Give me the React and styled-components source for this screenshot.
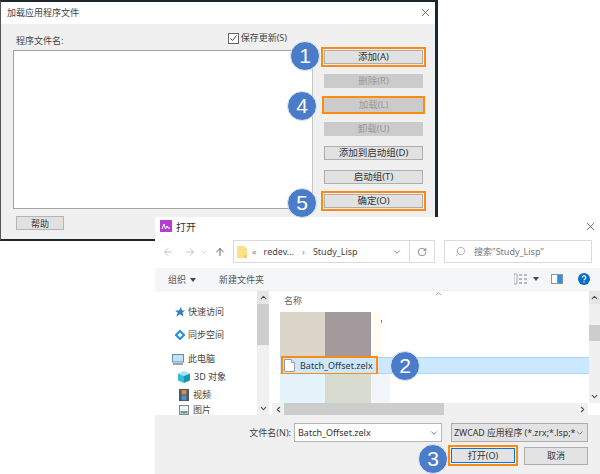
import React from 'react'
import styled, { createGlobalStyle } from 'styled-components'
import { X, ArrowLeft, ArrowRight, ArrowUp, ChevronDown, ChevronUp, ChevronLeft, ChevronRight, RotateCw, Search } from 'lucide-react'

const orange = '#ff8a0f'

const Global = createGlobalStyle`
  html, body { margin: 0; padding: 0; background: #fff; }
  * { box-sizing: border-box; }
  body {
    font-family: "Noto Sans", "Noto Sans CJK SC", sans-serif;
    font-size: 9px;
    color: #333;
  }
`

const Desktop = styled.div`
  position: relative;
  width: 600px;
  height: 474px;
  overflow: hidden;
  background: #fff;
`

const Badge = styled.div`
  position: absolute;
  left: ${({ $x }) => $x - 15}px;
  top: ${({ $y }) => $y - 15}px;
  width: 30px;
  height: 30px;
  border-radius: 50%;
  background: #4a7cc9;
  border: 1px solid #dfe7f4;
  color: #fff;
  font: 21px/28px "Liberation Sans", sans-serif;
  text-align: center;
  z-index: 5;
`

/* back dialog */
const LoadWindow = styled.section`
  position: absolute;
  left: 0;
  top: 0;
  width: 438px;
  height: 241px;
  background: #f0f0f0;
  border-style: solid;
  border-color: #1d2730;
  border-width: 2px 3px 2px 1px;
  border-left-color: #555;
`

const LoadTitle = styled.header`
  height: 22px;
  background: #fff;
  display: flex;
  align-items: center;
  justify-content: space-between;
  padding: 0 3px 2px 6px;
  color: #444;
`

const LoadBody = styled.div`
  display: flex;
  padding: 0 0 0 12px;
`

const FileColumn = styled.div`
  width: 300px;
  margin-right: 11px;
  padding-top: 8px;
`

const ListHead = styled.div`
  height: 18px;
  display: flex;
  justify-content: space-between;
  align-items: flex-start;
  padding: 2px 26px 0 3px;
  line-height: 14px;
  color: #444;
`

const SaveOption = styled.label`
  display: flex;
  align-items: center;
  gap: 2px;
  margin-top: -3px;
`

const CheckBox = styled.svg`
  width: 11px;
  height: 11px;
`

const FileList = styled.div`
  height: 159px;
  background: #fff;
  border: 1px solid #a4a4a4;
  border-right-color: #c4c4c4;
`

const HelpButton = styled.button`
  display: block;
  width: 48px;
  height: 14px;
  margin: 7px 0 0 3px;
  padding: 0;
  background: #e1e1e1;
  border: 1px solid #b4b4b4;
  font: inherit;
  line-height: 11px;
  color: #333;
`

const ActionColumn = styled.div`
  display: flex;
  flex-direction: column;
  gap: 10px;
  padding-top: 26px;
`

const ActionButton = styled.button`
  width: 99px;
  height: 14px;
  padding: 0 0 1px;
  font: inherit;
  font-size: 9.5px;
  line-height: 11px;
  background: ${({ disabled }) => (disabled ? '#cbcbcb' : '#e1e1e1')};
  border: 1px solid ${({ disabled }) => (disabled ? '#cbcbcb' : '#adadad')};
  color: ${({ disabled }) => (disabled ? '#999' : '#333')};
  outline: ${({ $marked }) => ($marked ? `2px solid ${orange}` : 'none')};
  outline-offset: ${({ $marked }) => ($marked === 'wide' ? 1 : 0)}px;
`

/* front file picker */
const OpenWindow = styled.section`
  position: absolute;
  left: 155px;
  top: 217px;
  width: 445px;
  height: 257px;
  background: #fff;
  z-index: 2;
  display: flex;
  flex-direction: column;
`

const OpenTitle = styled.header`
  height: 21px;
  flex: none;
  display: flex;
  align-items: center;
  gap: 4px;
  padding: 0 3px 3px 5px;
  font-size: 10px;
`

const Spacer = styled.div`
  flex: ${({ $w }) => ($w ? 'none' : 1)};
  width: ${({ $w }) => ($w ? `${$w}px` : 'auto')};
`

const NavBar = styled.div`
  height: 30px;
  flex: none;
  display: flex;
  align-items: flex-start;
  padding: 2px 8px 0 7px;
`

const NavButton = styled.span`
  width: ${({ $w }) => $w}px;
  height: 23px;
  flex: none;
  display: flex;
  align-items: center;
  color: ${({ $tone }) => $tone || '#c4c4c4'};
`

const AddressBox = styled.div`
  width: 202px;
  height: 23px;
  flex: none;
  display: flex;
  align-items: center;
  border: 1px solid #dadada;
  padding-left: 3px;
  color: #444;
`

const Crumb = styled.span`
  margin-left: ${({ $gap }) => $gap}px;
  color: ${({ $dim }) => ($dim ? '#888' : '#444')};
  white-space: nowrap;
`

const AddressChevron = styled.span`
  display: flex;
  margin-right: 7px;
  color: #666;
`

const AddressTail = styled.span`
  width: 25px;
  height: 21px;
  flex: none;
  display: flex;
  align-items: center;
  justify-content: center;
  border-left: 1px solid #dadada;
  color: #777;
`

const SearchBox = styled.div`
  width: 148px;
  height: 23px;
  flex: none;
  margin-left: 9px;
  display: flex;
  align-items: center;
  border: 1px solid #dadada;
  padding-left: 10px;
  gap: 8px;
  color: #777;
`

const MirroredSearch = styled(Search)`
  transform: scaleX(-1);
`

const ToolBar = styled.div`
  height: 23px;
  flex: none;
  display: flex;
  align-items: center;
  background: #f4f6f8;
  border-bottom: 1px solid #eef0f2;
  padding: 0 10px 0 13px;
  color: #555;
`

const ToolLabel = styled.span`
  margin-right: ${({ $gap }) => $gap}px;
`

const Caret = styled.span`
  display: inline-block;
  width: 0;
  height: 0;
  margin-left: ${({ $left }) => $left}px;
  border: 3.5px solid transparent;
  border-top: 4px solid #3d4a5c;
  border-bottom: 0;
  vertical-align: 1px;
`

const Browser = styled.div`
  height: 124px;
  flex: none;
  display: flex;
`

const Sidebar = styled.nav`
  width: 102px;
  flex: none;
  overflow: hidden;
  padding-top: 12px;
`

const SideItem = styled.div`
  height: ${({ $h }) => $h || 18}px;
  margin-top: ${({ $top }) => $top || 0}px;
  display: flex;
  align-items: center;
  gap: ${({ $gap }) => $gap}px;
  padding-left: ${({ $indent }) => $indent}px;
  line-height: 10px;
  white-space: nowrap;
  color: #444;
`

const SideScroll = styled.div`
  width: 12px;
  flex: none;
  background: #f0f0f0;
  display: flex;
  flex-direction: column;
  align-items: center;
  color: #555;
`

const ScrollEnd = styled.div`
  height: 13px;
  width: 100%;
  flex: none;
  display: flex;
  align-items: center;
  justify-content: center;
  background: ${({ $fill }) => $fill || 'transparent'};
`

const ScrollThumb = styled.div`
  width: 100%;
  height: ${({ $h }) => $h}px;
  margin-bottom: auto;
  background: #cdcdcd;
`

const ListPane = styled.div`
  flex: 1;
  min-width: 0;
  display: flex;
  flex-direction: column;
`

const ListBody = styled.div`
  height: 112px;
  flex: none;
  display: flex;
`

const Rows = styled.div`
  flex: 1;
  min-width: 0;
  padding-left: 11px;
`

const ColumnHead = styled.div`
  position: relative;
  height: 21px;
  padding: 3px 0 0 4px;
  color: #666;
`

const SortMark = styled.span`
  position: absolute;
  left: 154px;
  top: -3px;
  color: #888;
`

const Swatches = styled.div`
  height: ${({ $h }) => $h}px;
  display: flex;
`

const Swatch = styled.div`
  width: ${({ $w }) => $w}px;
  background: ${({ $c }) => $c};
  padding: 8px 0 0 10px;
`

const SwatchDot = styled.div`
  width: 1px;
  height: 3px;
  background: #6f93b8;
`

const SelectedRow = styled.div`
  height: 17px;
  background: #cce8ff;
  border-top: 1px solid #a6d7ff;
  border-bottom: 1px solid #a6d7ff;
  display: flex;
`

const FileName = styled.div`
  width: 97px;
  height: 19px;
  margin: -2px 0 0 1px;
  flex: none;
  display: flex;
  align-items: center;
  gap: 5px;
  outline: 2px solid ${orange};
  outline-offset: -2px;
  padding-left: 3px;
  color: #333;
  white-space: nowrap;
`

const RowScroll = styled.div`
  width: 11px;
  flex: none;
  background: #f0f0f0;
  display: flex;
  flex-direction: column;
  color: #555;
`

const RowThumb = styled.div`
  height: 16px;
  margin-top: 21px;
  margin-bottom: auto;
  background: #cdcdcd;
`

const HScroll = styled.div`
  height: 12px;
  flex: none;
  margin: 0 12px 0 3px;
  display: flex;
  align-items: center;
  background: #f0f0f0;
  color: #555;
`

const HThumb = styled.div`
  width: 160px;
  height: 12px;
  background: #cdcdcd;
  margin-right: auto;
`

const HEnd = styled.span`
  width: 12px;
  flex: none;
  display: flex;
  justify-content: center;
`

const Footer = styled.footer`
  flex: 1;
  background: #f0f0f0;
  display: flex;
  flex-direction: column;
  align-items: flex-end;
  gap: 5px;
  padding: 8px 12px 0 0;
`

const FooterRow = styled.div`
  display: flex;
  align-items: center;
  gap: 9px;
`

const FieldLabel = styled.span`
  margin-right: -6px;
  color: #444;
`

const NameField = styled.div`
  width: 148px;
  height: 19px;
  background: #fff;
  border: 1px solid #b5b5b5;
  display: flex;
  align-items: center;
  justify-content: space-between;
  padding: 0 2px 0 3px;
  color: #333;
`

const FilterField = styled(NameField)`
  width: 137px;
  background: #e3e3e3;
  border-color: #adadad;
  padding-left: 2px;
  white-space: nowrap;
  font-size: 8.8px;
`

const DialogButton = styled.button`
  width: 64px;
  height: ${({ $primary }) => ($primary ? 15 : 18)}px;
  margin: ${({ $primary }) => ($primary ? '1px 0 2px' : 0)};
  padding: 0;
  font: inherit;
  line-height: 12px;
  color: #333;
  background: #e3e3e3;
  border: 1px solid ${({ $primary }) => ($primary ? '#0078d7' : '#adadad')};
  outline: ${({ $primary }) => ($primary ? `2px solid ${orange}` : 'none')};
  outline-offset: 1px;
`

const AppMark = () => (
  <svg width="12" height="12" viewBox="0 0 12 12">
    <rect width="12" height="12" fill="#b23fd0" />
    <path d="M2 9l2-5 1.5 5L7 6l1 2h2" fill="none" stroke="#fff" strokeWidth="1" />
  </svg>
)

const FolderIcon = () => (
  <svg width="10" height="12" viewBox="0 0 10 12">
    <path d="M0 0h7l3 2v10H0z" fill="#ffe08a" />
    <path d="M7 9h3v3H7z" fill="#f4cc62" />
  </svg>
)

const ViewIcon = () => (
  <svg width="13" height="12" viewBox="0 0 13 12" fill="#b4bac2">
    <path d="M0 1h3v10H0z" fill="none" stroke="#a8aeb6" />
    <path d="M5 1h3v2H5zM10 1h3v2h-3zM5 5h3v2H5zM10 5h3v2h-3zM5 9h3v2H5zM10 9h3v2h-3z" />
  </svg>
)

const PaneIcon = () => (
  <svg width="12" height="10" viewBox="0 0 12 10">
    <rect width="12" height="10" fill="#8a97a6" />
    <rect x="1" y="1" width="5" height="8" fill="#fff" />
    <rect x="7" y="1" width="4" height="8" fill="#2e8ee0" />
  </svg>
)

const HelpIcon = () => (
  <svg width="12" height="12" viewBox="0 0 12 12">
    <circle cx="6" cy="6" r="6" fill="#0a6cc0" />
    <path d="M4.4 4.6a1.7 1.7 0 1 1 2.5 1.5c-.6.3-.9.6-.9 1.2" fill="none" stroke="#fff" strokeWidth="1.2" />
    <rect x="5.4" y="8.2" width="1.2" height="1.2" fill="#fff" />
  </svg>
)

const StarIcon = () => (
  <svg width="10" height="10" viewBox="0 0 10 10">
    <path d="M6 0l1 3.4h3L7.5 5.6 8.4 9.5 5 7.2 1.2 9.8 2.8 5.8 0 3.6h4z" fill="#2f7fc8" />
  </svg>
)

const SyncIcon = () => (
  <svg width="10" height="10" viewBox="0 0 10 10">
    <path d="M5 1l4 4-4 4-4-4z" fill="none" stroke="#1f8fe0" strokeWidth="2" />
  </svg>
)

const MonitorIcon = () => (
  <svg width="12" height="11" viewBox="0 0 12 11">
    <rect x="0.5" y="0.5" width="11" height="7.5" fill="#bfe3f8" stroke="#6d8aa3" />
    <rect x="1" y="9" width="10" height="2" fill="#9aa6b2" />
  </svg>
)

const CubeIcon = () => (
  <svg width="12" height="12" viewBox="0 0 12 12">
    <path d="M6 0l6 2.5-6 2.5-6-2.5z" fill="#9fe4f2" />
    <path d="M0 2.5l6 2.5v7l-6-2.5z" fill="#38bcd8" />
    <path d="M12 2.5L6 5v7l6-2.5z" fill="#1a93b8" />
  </svg>
)

const FilmIcon = () => (
  <svg width="10" height="12" viewBox="0 0 10 12">
    <rect width="10" height="12" fill="#4e5762" />
    <rect x="2.5" y="1" width="5" height="4.5" fill="#d98a4a" />
    <rect x="2.5" y="6.5" width="5" height="4.5" fill="#4f8fd0" />
  </svg>
)

const PictureIcon = () => (
  <svg width="10" height="10" viewBox="0 0 10 10">
    <rect x="0.5" y="0.5" width="9" height="9" fill="#eaf2f8" stroke="#7d8b98" />
    <rect x="1.5" y="6" width="7" height="2.5" fill="#6f9a78" />
  </svg>
)

const DocIcon = () => (
  <svg width="11" height="13" viewBox="0 0 11 13">
    <path d="M.5.5h7l3 3v9H.5z" fill="#fff" stroke="#9a9a9a" />
    <path d="M7.5.5v3h3" fill="#eee" stroke="#9a9a9a" />
  </svg>
)

const actions = [
  { label: '添加(A)', marked: 'wide' },
  { label: '删除(R)', disabled: true },
  { label: '加载(L)', disabled: true, marked: 'tight' },
  { label: '卸载(U)', disabled: true },
  { label: '添加到启动组(D)' },
  { label: '启动组(T)' },
  { label: '确定(O)', marked: 'wide' },
]

const places = [
  { label: '快速访问', icon: <StarIcon />, indent: 20, gap: 3 },
  { label: '同步空间', icon: <SyncIcon />, indent: 20, gap: 3, top: 5 },
  { label: '此电脑', icon: <MonitorIcon />, indent: 17, gap: 4, top: 6 },
  { label: '3D 对象', icon: <CubeIcon />, indent: 23, gap: 4 },
  { label: '视频', icon: <FilmIcon />, indent: 24, gap: 4, h: 17 },
  { label: '图片', icon: <PictureIcon />, indent: 24, gap: 4, h: 14 },
]

const badges = [
  { n: 1, x: 305, y: 56 },
  { n: 4, x: 302, y: 106 },
  { n: 5, x: 302, y: 203 },
  { n: 2, x: 405, y: 366 },
  { n: 3, x: 433, y: 459 },
]

const LoadDialog = () => (
  <LoadWindow>
    <LoadTitle>
      加载应用程序文件
      <X size={13} strokeWidth={1.2} color="#333" />
    </LoadTitle>
    <LoadBody>
      <FileColumn>
        <ListHead>
          <span>程序文件名:</span>
          <SaveOption>
            <CheckBox viewBox="0 0 11 11">
              <rect x="0.5" y="0.5" width="10" height="10" fill="#fff" stroke="#666" />
              <path d="M2.5 5.5l2 2 4-5" fill="none" stroke="#444" strokeWidth="1" />
            </CheckBox>
            保存更新(S)
          </SaveOption>
        </ListHead>
        <FileList />
        <HelpButton>帮助</HelpButton>
      </FileColumn>
      <ActionColumn>
        {actions.map(({ label, disabled, marked }) => (
          <ActionButton key={label} disabled={disabled} $marked={marked}>
            {label}
          </ActionButton>
        ))}
      </ActionColumn>
    </LoadBody>
  </LoadWindow>
)

const OpenDialog = () => (
  <OpenWindow>
    <OpenTitle>
      <AppMark />
      打开
      <Spacer />
      <X size={13} strokeWidth={1.2} color="#333" />
    </OpenTitle>
    <NavBar>
      <NavButton $w={22}><ArrowLeft size={12} /></NavButton>
      <NavButton $w={16}><ArrowRight size={12} /></NavButton>
      <NavButton $w={14}><ChevronDown size={8} /></NavButton>
      <NavButton $w={19} $tone="#666"><ArrowUp size={12} /></NavButton>
      <AddressBox>
        <FolderIcon />
        <Crumb $gap={5} $dim>«</Crumb>
        <Crumb $gap={7}>redev...</Crumb>
        <Crumb $gap={8} $dim>›</Crumb>
        <Crumb $gap={8}>Study_Lisp</Crumb>
        <Spacer />
        <AddressChevron><ChevronDown size={10} /></AddressChevron>
        <AddressTail><RotateCw size={10} /></AddressTail>
      </AddressBox>
      <SearchBox>
        <MirroredSearch size={11} strokeWidth={1.2} />
        搜索"Study_Lisp"
      </SearchBox>
    </NavBar>
    <ToolBar>
      <ToolLabel $gap={23}>组织<Caret $left={4} /></ToolLabel>
      <ToolLabel>新建文件夹</ToolLabel>
      <Spacer />
      <ViewIcon />
      <Caret $left={6} />
      <Spacer $w={12} />
      <PaneIcon />
      <Spacer $w={15} />
      <HelpIcon />
    </ToolBar>
    <Browser>
      <Sidebar>
        {places.map(({ label, icon, indent, gap, top, h }) => (
          <SideItem key={label} $indent={indent} $gap={gap} $top={top} $h={h}>
            {icon}
            {label}
          </SideItem>
        ))}
      </Sidebar>
      <SideScroll>
        <ScrollEnd $fill="#e6e6e6"><ChevronUp size={9} strokeWidth={3} /></ScrollEnd>
        <ScrollThumb $h={41} />
        <ScrollEnd><ChevronDown size={9} strokeWidth={3} /></ScrollEnd>
      </SideScroll>
      <ListPane>
        <ListBody>
          <Rows>
            <ColumnHead>
              名称
              <SortMark><ChevronUp size={9} /></SortMark>
            </ColumnHead>
            <Swatches $h={45}>
              <Swatch $w={45} $c="#dbd6c9" />
              <Swatch $w={46} $c="#a39a9e" />
              <Swatch $w={11} $c="#fffdf3"><SwatchDot /></Swatch>
            </Swatches>
            <SelectedRow>
              <FileName>
                <DocIcon />
                Batch_Offset.zelx
              </FileName>
            </SelectedRow>
            <Swatches $h={29}>
              <Swatch $w={45} $c="#e5f3fb" />
              <Swatch $w={46} $c="#d7dbd0" />
              <Swatch $w={19} $c="#f2f6fa" />
            </Swatches>
          </Rows>
          <RowScroll>
            <ScrollEnd $fill="#e6e6e6"><ChevronUp size={9} strokeWidth={3} /></ScrollEnd>
            <RowThumb />
            <ScrollEnd><ChevronDown size={9} strokeWidth={3} /></ScrollEnd>
          </RowScroll>
        </ListBody>
        <HScroll>
          <HEnd><ChevronLeft size={9} strokeWidth={3} /></HEnd>
          <HThumb />
          <HEnd><ChevronRight size={9} strokeWidth={3} /></HEnd>
        </HScroll>
      </ListPane>
    </Browser>
    <Footer>
      <FooterRow>
        <FieldLabel>文件名(N):</FieldLabel>
        <NameField>
          Batch_Offset.zelx
          <ChevronDown size={10} color="#666" />
        </NameField>
        <FilterField>
          ZWCAD 应用程序 (*.zrx;*.lsp;*
          <ChevronDown size={10} color="#666" />
        </FilterField>
      </FooterRow>
      <FooterRow>
        <DialogButton $primary>打开(O)</DialogButton>
        <DialogButton>取消</DialogButton>
      </FooterRow>
    </Footer>
  </OpenWindow>
)

const App = () => (
  <Desktop>
    <Global />
    <LoadDialog />
    <OpenDialog />
    {badges.map(({ n, x, y }) => (
      <Badge key={n} $x={x} $y={y}>{n}</Badge>
    ))}
  </Desktop>
)

export default App
